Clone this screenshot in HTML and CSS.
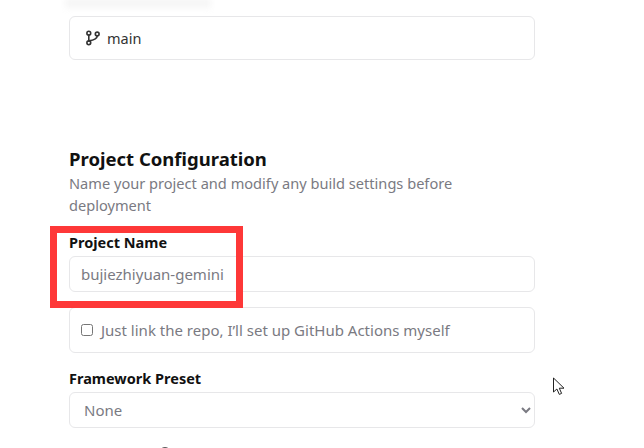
FILE: index.html
```html
<!DOCTYPE html>
<html lang="en">

<head>
  <meta http-equiv="Content-Type" content="text/html;charset=UTF-8" />
  <title>Project Configuration</title>
  <link rel="stylesheet" href="styles.css">
</head>

<body>
  <div class="top-fade"></div>

  <main>
    <div class="box branch-box">
      <svg class="branch-icon" viewBox="0 0 16 16" width="16" height="16" fill="none" stroke="currentColor" stroke-width="1.6" stroke-linecap="round" stroke-linejoin="round">
        <circle cx="3.8" cy="3.2" r="1.9"></circle>
        <circle cx="3.8" cy="12.8" r="1.9"></circle>
        <circle cx="12.2" cy="4" r="1.9"></circle>
        <path d="M3.8 5.1v5.8"></path>
        <path d="M12.2 5.9c0 3.2-3.6 4.2-8.4 5"></path>
      </svg>
      <span>main</span>
    </div>

    <section class="config">
      <h2>Project Configuration</h2>
      <p class="intro">Name your project and modify any build settings before deployment</p>

      <label class="field-label" for="projectName">Project Name</label>
      <input id="projectName" class="box text-input" type="text" value="bujiezhiyuan-gemini" />

      <label class="box check-box">
        <input type="checkbox" />
        <span>Just link the repo, I’ll set up GitHub Actions myself</span>
      </label>

      <label class="field-label" for="preset">Framework Preset</label>
      <select id="preset" class="box select-input">
        <option>None</option>
      </select>

      <div class="cut-row"><span class="help-dot"></span></div>
    </section>
  </main>

  <div class="highlight"></div>

  <svg class="cursor" viewBox="0 0 14 20" width="14" height="20" fill="#fff" stroke="#222" stroke-width="1">
    <path d="M1.5 1v14l3.4-3 2.4 5.4 2.3-1-2.3-5.2h4.7z"></path>
  </svg>
</body>

</html>
```

FILE: styles.css
```css
* {
  font-family: "Noto Sans", sans-serif;
  box-sizing: border-box;
}

html,
body {
  height: 100%;
}

body {
  margin: 0;
  background-color: white;
  overflow: hidden;
  position: relative;
  color: #111;
}

.top-fade {
  height: 10px;
  width: 146px;
  margin-left: 65px;
  background: #f6f6f6;
  filter: blur(3px);
  margin-top: -2px;
}

main {
  width: 466px;
  margin: 8px 0 0 69px;
}

.box {
  display: block;
  width: 100%;
  background: white;
  border: 1px solid #e7e7e9;
  border-radius: 6px;
}

.branch-box {
  height: 44px;
  display: flex;
  align-items: center;
  gap: 6px;
  padding-left: 15px;
  font-size: 14.5px;
  color: #333;
}

.branch-icon {
  color: #333;
}

/* Form */
.config {
  margin-top: 86px;
}

h2 {
  margin: 0;
  font-size: 18.5px;
  line-height: 26px;
  font-weight: 700;
}

.intro {
  margin: 0;
  font-size: 14.6px;
  line-height: 22px;
  color: #7a7a82;
}

.field-label {
  display: block;
  font-size: 14.5px;
  line-height: 20px;
  font-weight: 700;
}

.intro + .field-label {
  margin-top: 16px;
}

.text-input {
  height: 36px;
  margin-top: 4px;
  padding: 0 11px;
  font-size: 15px;
  color: #7a7a82;
  outline: none;
}

.check-box {
  height: 46px;
  margin-top: 15px;
  display: flex;
  align-items: center;
  gap: 8px;
  padding-left: 11px;
  font-size: 15px;
  color: #7a7a82;
}

.check-box input {
  width: 12px;
  height: 12px;
  margin: 0;
  flex: none;
}

.check-box + .field-label {
  margin-top: 15px;
}

.select-input {
  height: 36px;
  margin-top: 4px;
  padding: 0 10px;
  font-size: 15px;
  color: #7a7a82;
}

.cut-row {
  margin-top: 19px;
  padding-left: 90px;
}

.help-dot {
  display: block;
  width: 12px;
  height: 12px;
  border: 1.5px solid #555;
  border-radius: 50%;
}

/* Overlays */
.highlight {
  position: absolute;
  left: 50px;
  top: 226px;
  width: 193px;
  height: 82px;
  border: 7px solid #fe3838;
}

.cursor {
  position: absolute;
  left: 552px;
  top: 377px;
}
```
